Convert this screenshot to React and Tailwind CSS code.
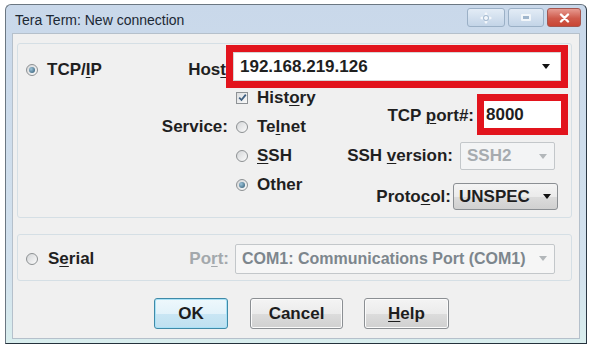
import React from "react";

const font = { fontFamily: '"Liberation Sans", Arial, sans-serif' };

function U({ children }) {
  return <span className="underline decoration-1 underline-offset-2">{children}</span>;
}

function Radio({ checked }) {
  return (
    <span className="flex h-[12px] w-[12px] shrink-0 items-center justify-center rounded-full border border-[#8d9193] bg-[linear-gradient(135deg,#d4d6d8,#fbfbfb)]">
      {checked && (
        <span className="h-[6px] w-[6px] rounded-full bg-[radial-gradient(circle_at_35%_35%,#9cc4da,#2d566f)]" />
      )}
    </span>
  );
}

function Check() {
  return (
    <span className="flex h-[12px] w-[12px] shrink-0 items-center justify-center border border-[#8e9295] bg-[linear-gradient(135deg,#dcdee0,#fafafa)]">
      <svg width="9" height="9" viewBox="0 0 9 9">
        <path d="M1.2 4.6 L3.5 7 L7.8 1.6" fill="none" stroke="#3f5f80" strokeWidth="1.8" />
      </svg>
    </span>
  );
}

function Arrow({ color = "#111" }) {
  return (
    <svg width="8" height="5" viewBox="0 0 8 5" className="shrink-0">
      <path d="M0 0 H8 L4 5 Z" fill={color} />
    </svg>
  );
}

function Button({ children, primary, width }) {
  return (
    <div
      className={
        "flex h-[31px] items-center justify-center rounded-[3px] border text-[17px] font-bold text-[#1d1d1d] " +
        width +
        (primary
          ? " border-[#3f8aa8] bg-[linear-gradient(#eef8fc_0%,#e2f2fa_50%,#c9e6f4_51%,#bfe0f0_100%)] shadow-[inset_0_0_0_1px_#a9e2f7]"
          : " border-[#8b8f93] bg-[linear-gradient(#f4f4f4_0%,#ebebeb_50%,#dcdcdc_51%,#d0d0d0_100%)] shadow-[inset_0_0_0_1px_#fbfbfb]")
      }
    >
      {children}
    </div>
  );
}

export default function App() {
  return (
    <div className="h-[349px] w-[591px] bg-white pl-[5px] pt-[4px]" style={font}>
      <div className="flex h-[340px] w-[582px] flex-col rounded-t-[6px] border border-[#6b7782] border-b-[#25323c] border-r-[#2b3844] bg-[linear-gradient(#c9d8ea,#d3e2ee_80%,#d9eeee)]">
        {/* title bar */}
        <div className="flex h-[28px] shrink-0 pl-[9px] pr-[5px]">
          <span className="self-center pt-[3px] text-[14px] text-[#1c2834]">Tera Term: New connection</span>
          <div className="ml-auto mt-[3px] flex h-[19px] gap-[3px]">
            <div className="flex w-[38px] items-center justify-center rounded-[3px] border border-[#9bb0c6] bg-[linear-gradient(#e3ecf6,#c3d4e7)]">
              <svg width="16" height="12" viewBox="0 0 16 12">
                <path d="M8 1 V11 M3 6 H13" stroke="#f4f7fb" strokeWidth="1.6" />
                <path d="M8 0 L6 2.5 H10 Z M8 12 L6 9.5 H10 Z M2 6 L4.5 4 V8 Z M14 6 L11.5 4 V8 Z" fill="#f4f7fb" />
                <circle cx="8" cy="6" r="2.6" fill="none" stroke="#a9bdd2" strokeWidth="1" />
              </svg>
            </div>
            <div className="flex w-[36px] items-center justify-center rounded-[3px] border border-[#9bb0c6] bg-[linear-gradient(#e3ecf6,#c3d4e7)]">
              <span className="h-[7px] w-[10px] rounded-[1px] border-2 border-[#f2f6fa] bg-[#9fb5cc]" />
            </div>
            <div className="flex w-[34px] items-center justify-center rounded-[3px] border border-[#a4564f] bg-[linear-gradient(#e79a90,#cf5a4b_55%,#c94534)]">
              <svg width="11" height="10" viewBox="0 0 11 10">
                <path d="M2 1.5 L9 8.5 M9 1.5 L2 8.5" stroke="#fff" strokeWidth="2.4" strokeLinecap="round" />
              </svg>
            </div>
          </div>
        </div>

        {/* client area */}
        <div className="mx-[6px] mb-[4px] flex flex-1 flex-col border border-[#b5c0cb] bg-[#f0f0f0] pt-[9px] text-[17px] font-bold text-[#1f1f1f]">
          {/* TCP/IP group */}
          <div className="ml-[4px] flex h-[175px] w-[555px] flex-col rounded-[3px] border border-[#d5dfe5] pt-[1px]">
            <div className="flex h-[43px]">
              <div className="flex w-[170px] items-center pl-[8px] pt-[7px]">
                <Radio checked />
                <span className="ml-[9px]">
                  TCP/<U>I</U>P
                </span>
              </div>
              <div className="flex w-[38px] items-center justify-end pt-[7px]">
                Hos<U>t</U>
              </div>
              <div className="flex w-[342px] bg-[#e2141d] p-[7px]">
                <div className="flex flex-1 items-center bg-white pl-[7px] pr-[11px] shadow-[inset_0_0_0_1px_#d6d6d6]">
                  <span>192.168.219.126</span>
                  <span className="ml-auto">
                    <Arrow />
                  </span>
                </div>
              </div>
            </div>

            <div className="flex">
              <div className="-mt-[5px] flex w-[322px] flex-col">
                <div className="flex h-[29px] items-center">
                  <span className="w-[210px]" />
                  <span className="ml-[8px]">
                    <Check />
                  </span>
                  <span className="ml-[9px]">
                    Hist<U>o</U>ry
                  </span>
                </div>
                <div className="flex h-[29px] items-center">
                  <span className="w-[210px] text-right">Service:</span>
                  <span className="ml-[8px]">
                    <Radio />
                  </span>
                  <span className="ml-[9px]">
                    Te<U>l</U>net
                  </span>
                </div>
                <div className="flex h-[29px] items-center">
                  <span className="w-[210px]" />
                  <span className="ml-[8px]">
                    <Radio />
                  </span>
                  <span className="ml-[9px]">
                    <U>S</U>SH
                  </span>
                </div>
                <div className="flex h-[29px] items-center">
                  <span className="w-[210px]" />
                  <span className="ml-[8px]">
                    <Radio checked />
                  </span>
                  <span className="ml-[9px]">Other</span>
                </div>
              </div>

              <div className="flex flex-1 flex-col">
                <div className="mr-[3px] mt-[6px] flex items-center justify-end">
                  <span className="mr-[3px] whitespace-nowrap pt-[3px]">
                    TCP <U>p</U>ort#:
                  </span>
                  <div className="flex h-[41px] w-[91px] bg-[#e2141d] p-[7px]">
                    <div className="flex flex-1 items-center bg-white pl-[2px]">8000</div>
                  </div>
                </div>
                <div className="mr-[16px] mt-[7px] flex h-[28px] items-center justify-end">
                  <span className="mr-[7px] whitespace-nowrap">
                    SSH <U>v</U>ersion:
                  </span>
                  <div className="flex h-full w-[95px] items-center rounded-[2px] border border-[#c3c7ca] bg-[#f3f4f5] pl-[6px] pr-[7px] text-[#a6abaf]">
                    SSH2
                    <span className="ml-auto">
                      <Arrow color="#b3b7ba" />
                    </span>
                  </div>
                </div>
                <div className="mr-[13px] mt-[13px] flex h-[27px] items-center justify-end">
                  <span className="mr-[2px] whitespace-nowrap">
                    Proto<U>c</U>ol:
                  </span>
                  <div className="flex h-full w-[105px] items-center rounded-[3px] border border-[#8b8f93] bg-[linear-gradient(#f4f4f4_0%,#ebebeb_50%,#dcdcdc_51%,#d0d0d0_100%)] pl-[5px] pr-[6px]">
                    UNSPEC
                    <span className="ml-auto">
                      <Arrow />
                    </span>
                  </div>
                </div>
              </div>
            </div>
          </div>

          {/* Serial group */}
          <div className="ml-[4px] mt-[16px] flex h-[47px] w-[555px] items-center rounded-[3px] border border-[#d5dfe5] pt-[2px]">
            <div className="flex w-[169px] items-center pl-[8px]">
              <Radio />
              <span className="ml-[10px]">
                S<U>e</U>rial
              </span>
            </div>
            <span className="w-[42px] text-right text-[#a3a8ac]">
              Po<U>r</U>t:
            </span>
            <div className="ml-[6px] flex h-[30px] w-[320px] items-center rounded-[2px] border border-[#c3c7ca] bg-[#f6f6f6] pl-[6px] pr-[7px] text-[16px] text-[#7d868d]">
              <span className="whitespace-nowrap">COM1: Communications Port (COM1)</span>
              <span className="ml-auto">
                <Arrow color="#b3b7ba" />
              </span>
            </div>
          </div>

          {/* buttons */}
          <div className="ml-[141px] mt-[17px] flex">
            <Button primary width="w-[74px]">OK</Button>
            <div className="ml-[22px]">
              <Button width="w-[93px]">Cancel</Button>
            </div>
            <div className="ml-[21px]">
              <Button width="w-[85px]">
                <U>H</U>elp
              </Button>
            </div>
          </div>
        </div>
      </div>
    </div>
  );
}
